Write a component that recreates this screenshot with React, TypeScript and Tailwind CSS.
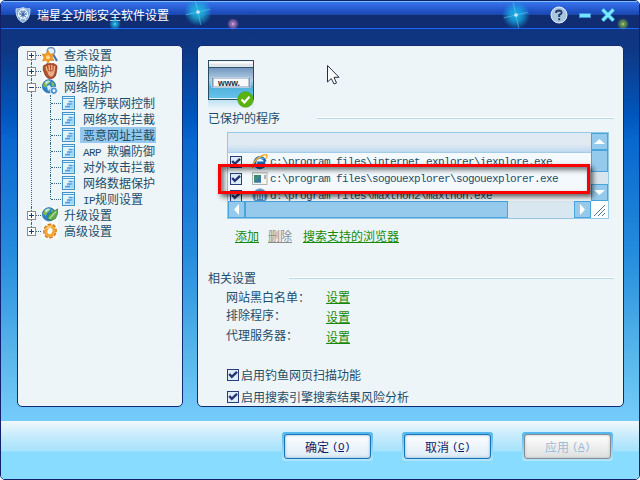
import React from 'react';

interface TreeItem {
  label: string;
  latin?: string;
  selected?: boolean;
}

const children: TreeItem[] = [
  { label: '程序联网控制' },
  { label: '网络攻击拦截' },
  { label: '恶意网址拦截', selected: true },
  { label: '欺骗防御', latin: 'ARP ' },
  { label: '对外攻击拦截' },
  { label: '网络数据保护' },
  { label: '规则设置', latin: 'IP' }
];

function ShieldIcon() {
  return (
    <svg className="block h-4 w-4" viewBox="0 0 16 16">
      <path d="M8 0.5 C6 1.5 3 2 1 1.8 C1 8 2 13 8 15.5 C14 13 15 8 15 1.8 C13 2 10 1.5 8 0.5Z" fill="#84acd8" stroke="#d5e8fa" strokeWidth="0.8" />
      <circle cx="8" cy="7" r="4.4" fill="#6d94c5" stroke="#f2f8ff" strokeWidth="1.1" />
      <path d="M4.5 4.5 L7 7 M11.5 4.5 L9 7 M2.5 9 L6 8.5 M13.5 9 L10 8.5 M5.5 13 L7 9.5 M10.5 13 L9 9.5 M8 1 V4" stroke="#eef7ff" strokeWidth="1" />
      <path d="M6.5 6 H9.5 L9 9 H7Z" fill="#3f66a8" />
    </svg>
  );
}

function Sparkle({ id, color, rays }: { id: string; color: string; rays?: boolean }) {
  return (
    <svg className="block h-full w-full" viewBox="0 0 30 30">
      <defs>
        <radialGradient id={id}>
          <stop offset="0" stopColor={color} />
          <stop offset="0.45" stopColor={color} stopOpacity="0.75" />
          <stop offset="1" stopColor={color} stopOpacity="0" />
        </radialGradient>
      </defs>
      <circle cx="15" cy="15" r="15" fill={`url(#${id})`} />
      {rays && <path d="M2 18 L28 12 M12 2 L18 29" stroke="#7fd4f2" strokeWidth="1" opacity="0.5" />}
      <circle cx="15" cy="15" r="2" fill="#cfe2f5" />
    </svg>
  );
}

function Expander({ open }: { open?: boolean }) {
  return (
    <svg className="block h-[9px] w-[9px]" viewBox="0 0 9 9" shapeRendering="crispEdges">
      <rect x="0.5" y="0.5" width="8" height="8" fill="#fdfdfb" stroke="#8c8c8c" />
      <path d={open ? 'M2 4.5 H7' : 'M2 4.5 H7 M4.5 2 V7'} stroke="#1c3c80" />
    </svg>
  );
}

function ScanIcon() {
  return (
    <svg className="block h-4 w-4" viewBox="0 0 16 16">
      <rect width="16" height="16" fill="#f8fbfc" />
      <path d="M11.5 8 L15 14" stroke="#4775ae" strokeWidth="2.2" />
      <circle cx="9" cy="4.3" r="3.8" fill="#e1f0fa" stroke="#6c8fbd" strokeWidth="1.5" />
      <path d="M6 3.5 L7.8 7 L12 7 L10 10 L12 13.5 L8 13.3 L6 16 L4.2 13.3 L0.5 14 L2 10.5 L0 7.2 L4 7Z" fill="#f29a23" stroke="#d77d10" strokeWidth="0.6" />
      <circle cx="6" cy="10.2" r="2" fill="#ffdc92" />
    </svg>
  );
}

function GloveIcon() {
  return (
    <svg className="block h-4 w-4" viewBox="0 0 16 16">
      <rect width="16" height="16" fill="#f8fbfc" />
      <path d="M1.3 3.5 Q1.6 1.5 3.8 2 Q4.5 0 6.5 0.8 Q8 -0.3 9.7 0.8 Q12 0 13 1.4 Q15.5 1.8 15 5 L14 11 Q13 15.5 8.5 15.7 Q5 15.6 3.4 12.5 L1.2 7Z" fill="#b4522c" stroke="#7b2c12" strokeWidth="0.7" />
      <path d="M4 3.5 L5.3 8 M7 2 L7.5 7.5 M9.8 2 V7.5 M12.6 3 L12 8" stroke="#f2bd94" strokeWidth="1.3" />
      <path d="M5.2 7.5 Q8.5 9.5 12.7 7.5 Q12.2 13.4 9 13.8 Q5.8 12.8 5.2 7.5Z" fill="#eab08a" />
    </svg>
  );
}

function GlobeIcon({ leaf }: { leaf?: boolean }) {
  return (
    <svg className="block h-4 w-4" viewBox="0 0 16 16">
      <rect width="16" height="16" fill="#f8fbfc" />
      <circle cx="7" cy="7.3" r="6.7" fill="#2a83c9" stroke="#1c67a8" strokeWidth="0.6" />
      <path d="M2 4 Q4 1 7 1.5 L8 4 L5 6 L4 9 L1.2 7Z M9 2.5 L12 4 L12.5 6.5 L10 7Z" fill="#82bd4c" />
      <path d="M3 3 Q6 0.8 9 2 Q6 3 4 6Z" fill="#d7f0fb" opacity="0.8" />
      {leaf ? (
        <>
          <path d="M6.5 8 L15.5 1.8 L15.8 6 L13.5 11.5 L9 13.5 L5.5 11.5Z" fill="#5eae4d" stroke="#2d8131" strokeWidth="0.7" />
          <path d="M7.5 11.5 L14 4.5" stroke="#b5dfa1" strokeWidth="1.2" />
        </>
      ) : (
        <>
          <path d="M5 7 L8 6 L9 9 L6 12Z" fill="#dceffa" />
          <circle cx="11.8" cy="11.7" r="3.7" fill="#4b91cf" stroke="#e8f4fc" strokeWidth="0.9" />
          <circle cx="12" cy="11.7" r="1.4" fill="#fff" />
        </>
      )}
    </svg>
  );
}

function GearIcon() {
  return (
    <svg className="block h-4 w-4" viewBox="0 0 16 16">
      <rect width="16" height="16" fill="#f8fbfc" />
      <g transform="rotate(18 8 8)">
        <ellipse cx="8" cy="8" rx="5.6" ry="6.4" fill="none" stroke="#d17814" strokeWidth="2.4" strokeDasharray="3.2 1.5" />
        <ellipse cx="8" cy="8" rx="4" ry="4.8" fill="none" stroke="#f4a638" strokeWidth="3.2" />
        <path d="M4 7 Q5 4 8 3.2" fill="none" stroke="#ffda92" strokeWidth="1.3" />
      </g>
    </svg>
  );
}

function PageIcon() {
  return (
    <svg className="block h-[14px] w-[14px] shrink-0" viewBox="0 0 14 14">
      <rect width="14" height="14" fill="#fff" />
      <rect x="0.5" y="0.5" width="12" height="13" fill="#e4f4fc" stroke="#4292c9" />
      <path d="M2 12.5 L12 4 V12.5Z" fill="#a5d6f2" />
      <path d="M1 2.5 H12.5" stroke="#4b9ed2" />
      <path d="M6.5 5.5 H10.5 M5 8 H9.5 M3 10.5 H8" stroke="#4f9cd8" strokeWidth="1.4" />
    </svg>
  );
}

function Checkbox() {
  return (
    <svg className="block h-3 w-3 shrink-0" viewBox="0 0 12 12">
      <rect x="0.5" y="0.5" width="11" height="11" fill="#dcecf8" stroke="#283c78" />
      <path d="M2.2 5 L4.8 7.8 L10 2.8" fill="none" stroke="#263474" strokeWidth="2.4" />
    </svg>
  );
}

function SiteIcon() {
  return (
    <svg className="block h-[52px] w-[47px]" viewBox="0 0 47 52">
      <defs>
        <linearGradient id="siteSky" x1="0" y1="0" x2="0" y2="1">
          <stop offset="0.15" stopColor="#6a8fb8" />
          <stop offset="0.5" stopColor="#b2cfe5" />
          <stop offset="0.7" stopColor="#52b2dc" />
          <stop offset="1" stopColor="#69c5ed" />
        </linearGradient>
        <linearGradient id="siteFade" x1="0" y1="0" x2="0" y2="1">
          <stop offset="0" stopColor="#bfe2f3" />
          <stop offset="1" stopColor="#edf5f9" />
        </linearGradient>
      </defs>
      <rect x="0" y="40" width="46" height="9" fill="url(#siteFade)" />
      <rect x="0.5" y="0.5" width="45" height="39" fill="url(#siteSky)" stroke="#264d63" />
      <rect x="1" y="1" width="44" height="6" fill="#dfe5e8" />
      <path d="M1 2.5 H45" stroke="#fff" strokeWidth="2" />
      <path d="M1 7.5 H45" stroke="#30546d" strokeWidth="1" />
      <rect x="3.5" y="17.5" width="39" height="10" rx="1" fill="#8098b8" stroke="#b9cce0" />
      <rect x="5.5" y="18.5" width="35" height="8" fill="#f7f9fa" />
      <text x="10" y="25.5" fontFamily="Liberation Sans" fontSize="8.5" fontWeight="bold" fill="#25313d" textLength="22" lengthAdjust="spacingAndGlyphs">www.</text>
      <path d="M1 38.5 H45" stroke="#def3fb" />
      <circle cx="37.5" cy="39.5" r="7.8" fill="#5bb310" stroke="#469b0b" strokeWidth="0.6" />
      <path d="M33.5 39.5 L36.4 42.3 L41.5 36.7" fill="none" stroke="#fff" strokeWidth="2.2" />
    </svg>
  );
}

function IeIcon() {
  return (
    <svg className="block h-4 w-4" viewBox="0 0 16 16">
      <path d="M13.3 9 H5.2 M13.2 7.5 A5.2 5.2 0 1 0 12.5 11.5" fill="none" stroke="#1765b5" strokeWidth="2.8" />
      <path d="M4.5 6.5 Q8 2.5 11.5 5" fill="none" stroke="#79c6ef" strokeWidth="1.1" />
      <path d="M1 14 Q-1 10 6 4.2 Q14 -1.5 15 1.5 Q15.2 2.5 14 4.5" fill="none" stroke="#eeae2f" strokeWidth="1.5" />
    </svg>
  );
}

function SogouIcon() {
  return (
    <svg className="block h-4 w-4" viewBox="0 0 16 16">
      <rect x="0.5" y="1.5" width="14.5" height="12" fill="#f6f6f2" stroke="#b0b3b2" />
      <path d="M0.5 2 H15" stroke="#c9cccb" />
      <rect x="2" y="4" width="7" height="7.5" fill="#3c8f75" />
      <path d="M2 11.5 L9 4 V11.5Z" fill="#3c77a5" />
      <path d="M13 4 V8" stroke="#647078" />
    </svg>
  );
}

function MaxthonIcon() {
  return (
    <svg className="block h-4 w-4" viewBox="0 0 16 16">
      <circle cx="8" cy="8" r="7.3" fill="#5291c5" stroke="#a0bdd3" />
      <path d="M4.2 12 V5.5 H6.5 V11 M6.5 5.5 H9.3 V11 M9.3 5.5 H11.8 V12" fill="none" stroke="#d9edf8" strokeWidth="1.4" />
    </svg>
  );
}

const programs = [
  { path: 'c:\\program files\\internet explorer\\iexplore.exe', icon: <IeIcon /> },
  { path: 'c:\\program files\\sogouexplorer\\sogouexplorer.exe', icon: <SogouIcon /> },
  { path: 'd:\\program files\\maxthon2\\maxthon.exe', icon: <MaxthonIcon /> }
];

interface RootProps {
  label: string;
  icon: React.ReactNode;
  open?: boolean;
  first?: boolean;
  last?: boolean;
}

function TreeRoot({ label, icon, open, first, last }: RootProps) {
  return (
    <div className="flex h-4 items-center">
      <div className="flex h-4 flex-col items-center">
        <span className={`h-1 border-l border-dotted ${first ? 'border-transparent' : 'border-[#39647e]'}`} />
        <Expander open={open} />
        <span className={`h-[3px] border-l border-dotted ${last ? 'border-transparent' : 'border-[#39647e]'}`} />
      </div>
      <span className="mr-px w-[5px] border-t border-dotted border-[#39647e]" />
      {icon}
      <span className="ml-[6px]">{label}</span>
    </div>
  );
}

function Arrow({ d, className }: { d: string; className: string }) {
  return (
    <div className={`flex shrink-0 items-center justify-center border border-[#48a5dc] bg-[#96caec] ${className}`}>
      <svg className="block h-[11px] w-[11px]" viewBox="0 0 11 11">
        <path d={d} fill="#fff" />
      </svg>
    </div>
  );
}

function Heading({ label, gap }: { label: string; gap: string }) {
  return (
    <div className="flex h-4 items-center">
      <span>{label}</span>
      <span className={`h-[2px] flex-1 border-b border-[#b8d9e8] bg-white ${gap}`} />
    </div>
  );
}

function GreenLink({ children }: { children: string }) {
  return <a className="h-[15px] border-b border-[#158a06] leading-[15px] text-[#158a06]">{children}</a>;
}

function DialogButton({ label, hotkey, disabled }: { label: string; hotkey: string; disabled?: boolean }) {
  return (
    <div className="h-[29px] w-[91px] rounded-[3px] bg-gradient-to-b from-[#52b7ee] to-[#b2e6ff] p-[2px]">
      <button
        disabled={disabled}
        className={`flex h-[25px] w-full items-center justify-center rounded-[3px] border bg-gradient-to-b from-white ${disabled ? 'border-[#858b92] to-[#dedfe0] text-[#9abbd9] shadow-[inset_0_0_3px_#b9bec2]' : 'border-[#1874b8] to-[#dcebf7] text-[#101d68] shadow-[inset_0_0_3px_#8bacc6]'}`}
      >
        <span>{label}</span>
        <span className="ml-[3px] font-['Liberation_Mono'] text-[11px] tracking-[-0.6px]">(<u>{hotkey}</u>)</span>
      </button>
    </div>
  );
}

export default function App() {
  return (
    <div className="bg-white">
      <div className="relative flex h-[480px] w-[640px] flex-col overflow-hidden rounded-[5px] border border-[#10206c] bg-[#88dcff] font-['Noto_Sans_CJK_SC',sans-serif] text-[12px] leading-4 whitespace-pre text-[#1d4d69]">
        <header className="flex h-[28px] shrink-0 items-center border-t border-b border-t-[#79bff5] border-b-[#1d68fa] bg-[linear-gradient(#3974ed_0px,#2356ca_8px,#1a46ad_13px,#102d70_13px,#102d74_26px)] pl-[14px] text-white">
          <ShieldIcon />
          <span className="ml-[6px] text-[12px]">瑞星全功能安全软件设置</span>
          <div className="ml-auto flex items-center pr-[24px]">
            <svg className="h-[18px] w-[18px]" viewBox="0 0 18 18">
              <circle cx="9" cy="9" r="8" fill="#a8c6df" stroke="#e2eff9" strokeWidth="1" />
              <path d="M6.2 7 V6 Q6.5 4.5 9 4.5 Q12 4.6 11.6 6.8 Q11.3 8 9.2 9 V11 M9.2 12.3 V14.2" fill="none" stroke="#253b69" strokeWidth="2" />
            </svg>
            <span className="ml-[11px] h-[5px] w-3 border border-[#3993e6] bg-[#76e4ff]" />
            <svg className="ml-[10px] h-[14px] w-[14px]" viewBox="0 0 14 14">
              <path d="M1.5 1.5 L12.5 12.5 M12.5 1.5 L1.5 12.5" stroke="#3997e4" strokeWidth="4" />
              <path d="M1.5 1.5 L12.5 12.5 M12.5 1.5 L1.5 12.5" stroke="#7aebff" strokeWidth="2.6" />
            </svg>
          </div>
        </header>

        {/* 标题栏光点 */}
        <div className="absolute top-[-3px] left-[183px] h-7 w-7"><Sparkle id="s1" color="#1fb5df" rays /></div>
        <div className="absolute top-0 left-[499px] h-7 w-8"><Sparkle id="s2" color="#17afe6" rays /></div>
        <div className="absolute top-[17px] left-[226px] h-3 w-3"><Sparkle id="s3" color="#b678bd" /></div>
        <div className="absolute top-[17px] left-[108px] h-3 w-3"><Sparkle id="s4" color="#1caedf" /></div>
        <div className="absolute top-[17px] left-[616px] h-3 w-3"><Sparkle id="s5" color="#79a744" /></div>

        <main className="flex h-[392px] shrink-0 gap-[14px] bg-[linear-gradient(#10347e_0px,#0e3784_20px,#0057bd_88px,#0866ce_110px,#258cdd_225px,#58b6eb_325px,#75ccfa_392px)] pt-4 pl-4">
          <aside className="h-[362px] w-[166px] rounded-[5px] border border-[#102b70] bg-[#edf5f9] pt-[1px] pl-[9px]">
            <TreeRoot label="查杀设置" icon={<ScanIcon />} first />
            <TreeRoot label="电脑防护" icon={<GloveIcon />} />
            <TreeRoot label="网络防护" icon={<GlobeIcon />} open />
            <div className="ml-1 border-l border-dotted border-[#39647e] pl-[18px]">
              {children.map((item, i) => (
                <div key={item.label} className="flex h-4 items-center">
                  <span className={`self-start border-l border-dotted border-[#39647e] ${i === 6 ? 'h-2' : 'h-4'}`} />
                  <span className="mr-px w-[10px] border-t border-dotted border-[#39647e]" />
                  <PageIcon />
                  <span className={`ml-[4px] h-4 pr-px pl-[3px] ${item.selected ? 'bg-[#94c9ed]' : ''}`}>
                    {item.latin && <span className="font-['Liberation_Mono'] text-[11px] tracking-[-0.6px]">{item.latin}</span>}
                    {item.label}
                  </span>
                </div>
              ))}
            </div>
            <TreeRoot label="升级设置" icon={<GlobeIcon leaf />} />
            <TreeRoot label="高级设置" icon={<GearIcon />} last />
          </aside>

          <section className="h-[362px] w-[427px] rounded-[5px] border border-[#102b70] bg-[#edf5f9] pt-[14px] pr-[9px] pl-[10px]">
            <SiteIcon />
            <div className="-mt-[2px]"><Heading label="已保护的程序" gap="ml-[37px]" /></div>

            <div className="mt-[6px] ml-[19px] h-[87px] w-[382px] border border-[#94c8e6] bg-[#d9e7f0]">
              <div className="flex h-[68px]">
                <div className="h-full flex-1 overflow-hidden bg-[#f3f9fd]">
                  <div className="h-5 border-b border-[#a5cce7] bg-gradient-to-b from-[#dfeaf3] from-60% to-[#bfdaee]" />
                  {programs.map((program) => (
                    <div key={program.path} className="flex h-[17px] items-center pl-[2px]">
                      <Checkbox />
                      <span className="ml-[10px]">{program.icon}</span>
                      <span className="ml-[2px] font-['Liberation_Mono'] text-[11px] tracking-[-0.6px]">{program.path}</span>
                    </div>
                  ))}
                </div>
                <div className="flex w-[17px] flex-col bg-[#d9e5ee]">
                  <Arrow d="M0 8 L5.5 3 L11 8Z" className="h-[17px]" />
                  <div className="h-[22px] border border-[#48a5dc] bg-[#96caec]" />
                  <Arrow d="M0 3 L5.5 8 L11 3Z" className="mt-auto h-[17px]" />
                </div>
              </div>
              <div className="flex h-[17px]">
                <Arrow d="M8 0 L3 5.5 L8 11Z" className="w-[17px]" />
                <div className="w-[263px] border border-[#48a5dc] bg-[#96caec]" />
                <Arrow d="M3 0 L8 5.5 L3 11Z" className="ml-auto w-[17px]" />
                <svg className="h-[17px] w-[17px] bg-white" viewBox="0 0 17 17">
                  <path d="M3 15 L14 4 M7 15 L14 8 M11 15 L14 12" stroke="#52789e" strokeWidth="1" />
                </svg>
              </div>
            </div>

            <div className="mt-[9px] flex gap-[9px] pl-[27px]">
              <GreenLink>添加</GreenLink>
              <a className="h-[15px] border-b border-[#8c8c8c] leading-[15px] text-[#8c8c8c]">删除</a>
              <span className="ml-[2px] flex"><GreenLink>搜索支持的浏览器</GreenLink></span>
            </div>

            <div className="mt-[27px]"><Heading label="相关设置" gap="ml-[33px]" /></div>
            <div className="mt-[3px] flex pl-[18px]">
              <div className="flex w-[100px] flex-col">
                <span>网站黑白名单：</span>
                <span className="mt-[2px]">排除程序：</span>
                <span className="mt-[4px]">代理服务器：</span>
              </div>
              <div className="flex flex-col gap-[5px]">
                <GreenLink>设置</GreenLink>
                <GreenLink>设置</GreenLink>
                <GreenLink>设置</GreenLink>
              </div>
            </div>
            <div className="mt-[23px] flex h-4 items-center gap-[2px] pl-[19px]">
              <Checkbox />
              <span>启用钓鱼网页扫描功能</span>
            </div>
            <div className="mt-[6px] flex h-4 items-center gap-[2px] pl-[19px]">
              <Checkbox />
              <span>启用搜索引擎搜索结果风险分析</span>
            </div>
          </section>
        </main>

        <footer className="flex flex-1 gap-[29px] bg-[linear-gradient(#f2f8fb_0px,#c8ecfc_14px,#a6e2fc_30px,#88dcff_31px)] pt-[11px] pl-[281px]">
          <DialogButton label="确定" hotkey="O" />
          <DialogButton label="取消" hotkey="C" />
          <DialogButton label="应用" hotkey="A" disabled />
        </footer>

        {/* 红框标注 */}
        <div className="absolute top-[163px] left-[217px] h-[30px] w-[372px] border-[3px] border-[#fa0000] shadow-[3px_3px_5px_#0009,inset_3px_3px_5px_#0008]" />
        <svg className="absolute top-[64px] left-[326px] h-[20px] w-[13px]" viewBox="0 0 13 20">
          <path d="M0.5 0.5 V17 L4.3 13.5 L7 19 L9.5 18 L7 12.3 H12Z" fill="#fff" stroke="#253047" />
        </svg>
      </div>
    </div>
  );
}
